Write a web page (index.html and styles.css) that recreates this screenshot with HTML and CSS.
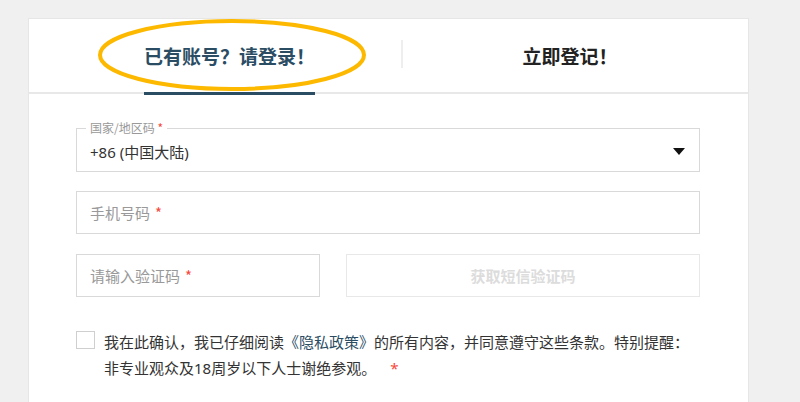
FILE: index.html
```html
<!DOCTYPE html>
<html lang="zh-CN">
<head>
    <meta charset="UTF-8">
    <meta name="viewport" content="width=device-width, initial-scale=1.0">
    <title>登录</title>
    <link rel="stylesheet" href="styles.css">
</head>
<body>
    <div class="card">
        <div class="tabs">
            <div class="tab active">已有账号？请登录！</div>
            <div class="tab-sep"></div>
            <div class="tab">立即登记！</div>
            <!-- 标注圈 -->
            <svg class="mark" width="268" height="72" viewBox="0 0 268 72">
                <ellipse cx="134" cy="36" rx="132" ry="34" fill="none" stroke="#fcb900" stroke-width="4"/>
            </svg>
        </div>

        <div class="form">
            <fieldset class="select">
                <legend>国家/地区码 <span class="req">*</span></legend>
                <div class="select-value">
                    <span>+86 (中国大陆)</span>
                    <span class="arrow"></span>
                </div>
            </fieldset>

            <div class="field">手机号码 <span class="req">*</span></div>

            <div class="code-row">
                <div class="field">请输入验证码 <span class="req">*</span></div>
                <div class="btn-code">获取短信验证码</div>
            </div>

            <div class="agree">
                <span class="checkbox"></span>
                <p>我在此确认，我已仔细阅读<a href="#">《隐私政策》</a>的所有内容，并同意遵守这些条款。特别提醒：非专业观众及18周岁以下人士谢绝参观。<span class="req star">*</span></p>
            </div>
        </div>
    </div>
</body>
</html>
```

FILE: styles.css
```css
body {
    margin: 0;
    background-color: #f0f0f0;
    font-family: "Noto Sans", "Noto Sans CJK SC", sans-serif;
    color: #333;
    overflow: hidden;
}
.card {
    margin: 18px 0 0 28px;
    width: 719px;
    height: 400px;
    background-color: #fff;
    border: 1px solid #e6e6e6;
}
.tabs {
    position: relative;
    display: grid;
    grid-template-columns: 343px 2px 1fr;
    align-items: center;
    height: 73px;
    padding: 0 11px 0 29px;
    border-bottom: 2px solid #e8e8e8;
}
.tab {
    position: relative;
    height: 73px;
    display: flex;
    align-items: center;
    justify-content: center;
    font-family: "Noto Sans CJK SC", sans-serif;
    font-size: 19px;
    font-weight: bold;
    color: #222;
}
.tab.active {
    color: #2b4d64;
}
.tab.active::after {
    content: "";
    position: absolute;
    bottom: -3px;
    left: 86px;
    width: 171px;
    height: 3px;
    background-color: #2b4d64;
}
.tab-sep {
    height: 28px;
    background-color: #eee;
    margin-top: -4px;
}
.mark {
    position: absolute;
    left: 69px;
    top: 0;
}
.form {
    padding: 27px 48px 0 47px;
}
.req {
    color: #f5493d;
}
.select {
    margin: 0;
    padding: 0 0 3px 9px;
    border: 1px solid #d9d9d9;
    height: 51px;
    box-sizing: border-box;
}
.select legend {
    padding: 0 4px;
    font-size: 12px;
    line-height: 14px;
    color: #999;
    font-family: "Noto Sans CJK SC", sans-serif;
}
.select-value {
    display: flex;
    align-items: center;
    justify-content: space-between;
    height: 32px;
    padding: 0 14px 0 4px;
    font-size: 15px;
}
.arrow {
    width: 0;
    height: 0;
    border-left: 6px solid transparent;
    border-right: 6px solid transparent;
    border-top: 7px solid #111;
}
.field {
    margin-top: 19px;
    height: 43px;
    box-sizing: border-box;
    border: 1px solid #d9d9d9;
    padding-left: 13px;
    display: flex;
    align-items: center;
    gap: 5px;
    font-family: "Noto Sans CJK SC", sans-serif;
    font-size: 15px;
    color: #999;
}
.code-row {
    display: grid;
    grid-template-columns: 244px 1fr;
    gap: 26px;
    margin-top: 20px;
}
.code-row .field {
    margin-top: 0;
}
.btn-code {
    height: 43px;
    box-sizing: border-box;
    border: 1px solid #e8e8e8;
    display: flex;
    align-items: center;
    justify-content: center;
    font-family: "Noto Sans CJK SC", sans-serif;
    font-size: 15px;
    font-weight: bold;
    color: #dcdcdc;
}
.agree {
    display: flex;
    gap: 9px;
    margin-top: 32px;
}
.checkbox {
    flex: none;
    width: 17px;
    height: 16px;
    margin-top: 2px;
    border: 1px solid #cfcfcf;
}
.agree p {
    margin: 0;
    font-size: 15px;
    line-height: 26px;
    color: #333;
}
.agree a {
    color: #2b4d64;
    text-decoration: none;
}
.star {
    margin-left: 14px;
}
```
